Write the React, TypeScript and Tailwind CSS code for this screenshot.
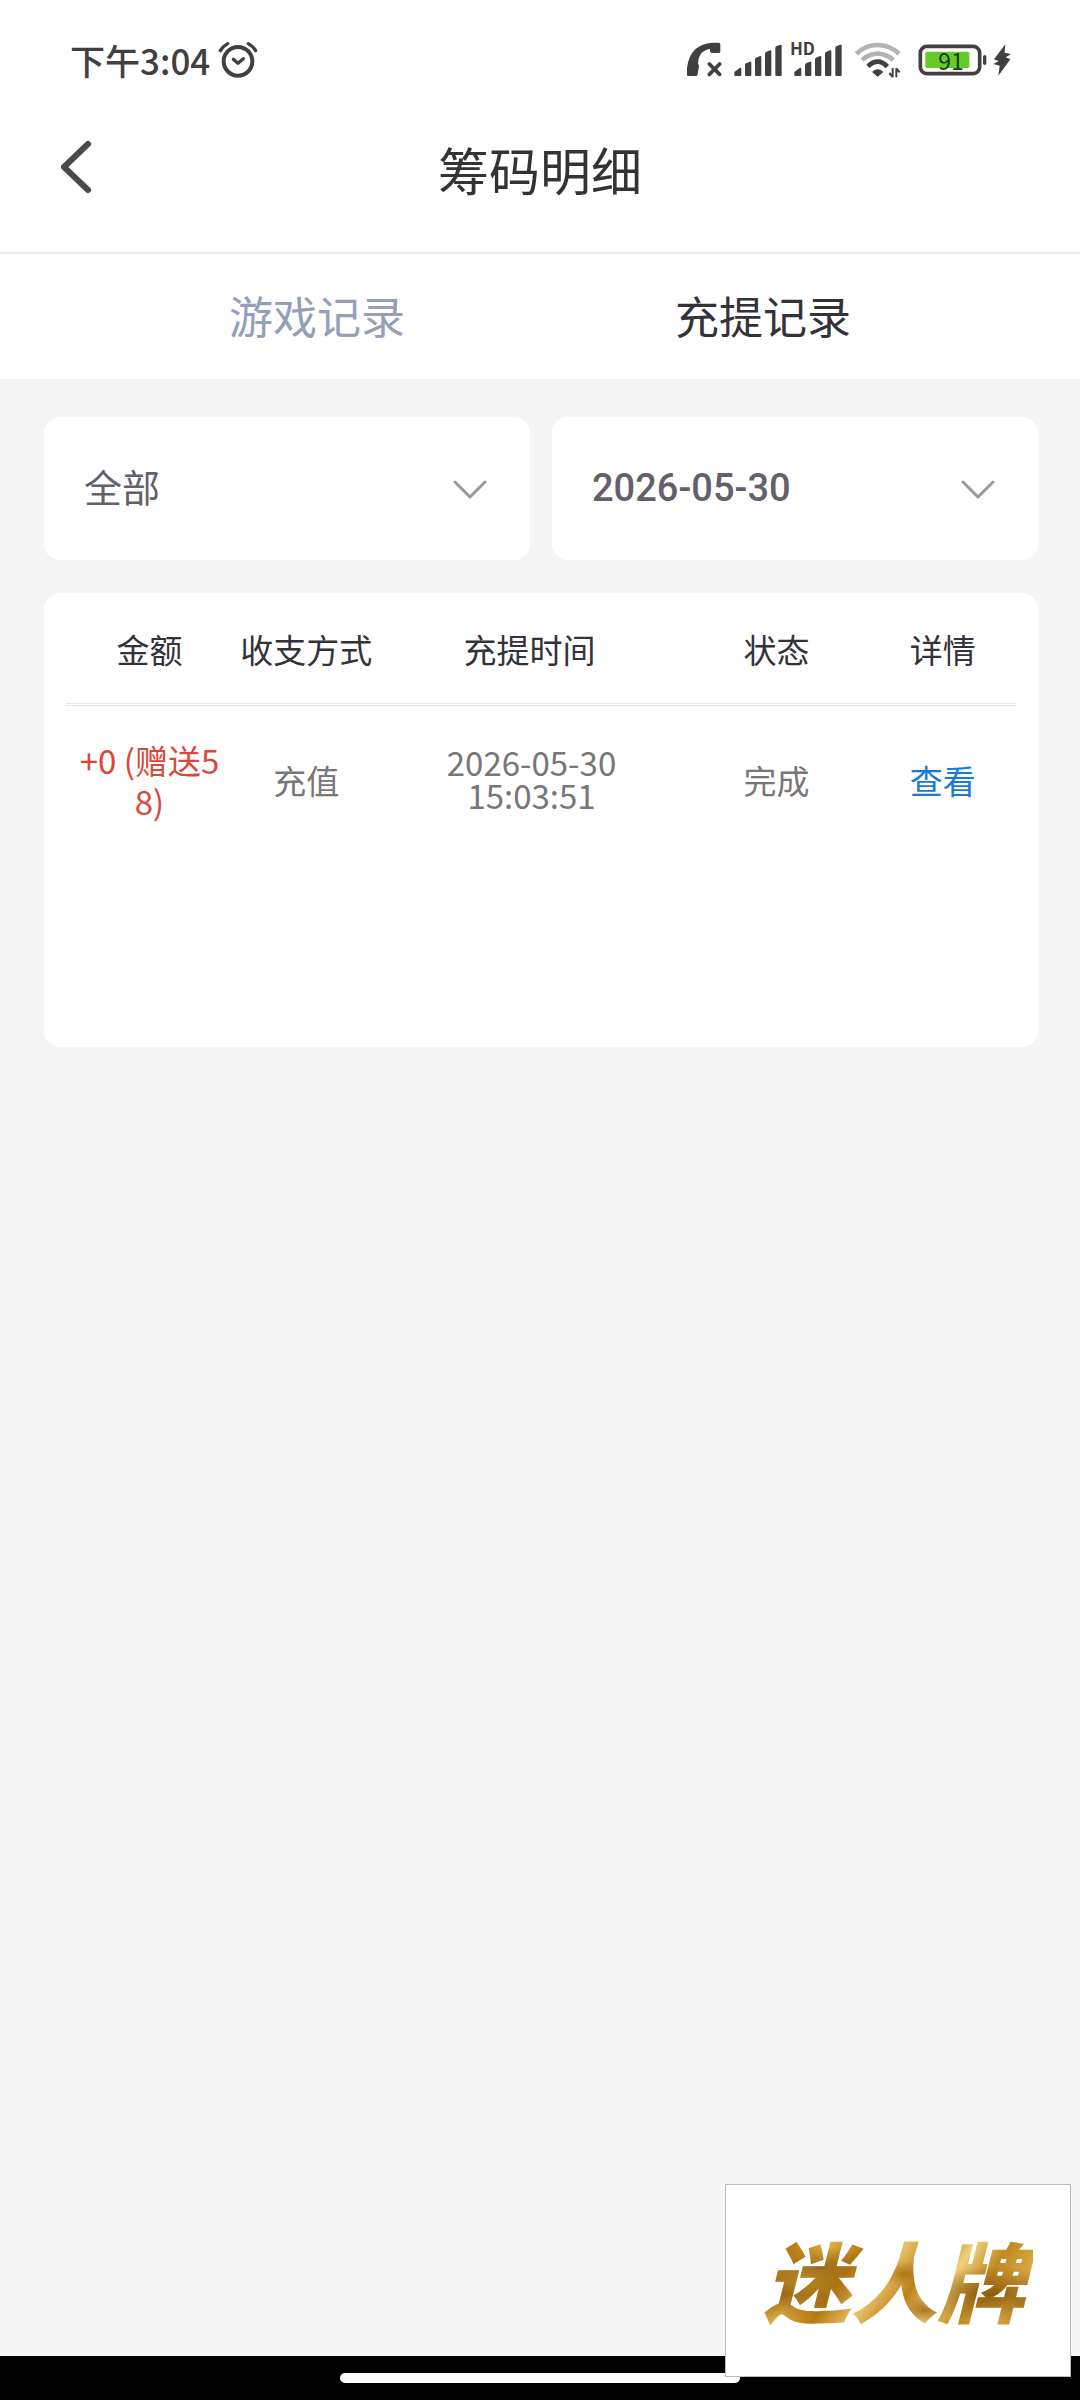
import React, { useState } from 'react';

interface ChipRecord {
  id: number;
  amount: string;
  method: string;
  date: string;
  time: string;
  status: string;
}

interface FilterProps {
  label: string;
  options: string[];
  className?: string;
}

const records: ChipRecord[] = [
  { id: 1, amount: '+0 (赠送58)', method: '充值', date: '2026-05-30', time: '15:03:51', status: '完成' },
];

const tabs = ['游戏记录', '充提记录'];

const SignalBars = () => (
  <svg className="w-12 h-8" viewBox="0 0 144 96" fill="#404040" aria-hidden="true">
    <path d="M1 84 17 72q5-2 5 3v18q0 3-3 3H4q-3 0-3-3z" />
    <path d="M33 63q0-3 3-5l12-5q4-1 4 3v37q0 3-3 3H36q-3 0-3-3z" />
    <path d="M63 46q0-3 3-5l12-5q4-1 4 3v54q0 3-3 3H66q-3 0-3-3z" />
    <path d="M93 29q0-3 3-5l12-5q4-1 4 3v71q0 3-3 3H96q-3 0-3-3z" />
    <path d="M124 12q0-3 3-5l12-5q4-1 4 3v88q0 3-3 3h-13q-3 0-3-3z" />
  </svg>
);

const StatusBar = () => (
  <div className="flex h-[119px] items-center justify-between pl-[70px] pr-[68px] text-[#404040]">
    <div className="flex items-center gap-2">
      <span className="text-[35px] font-medium leading-10">下午3:04</span>
      <svg className="w-10 h-10" viewBox="0 0 120 120" fill="none" stroke="#404040" strokeLinecap="round" aria-hidden="true">
        <circle cx="60" cy="64" r="43" strokeWidth="12" />
        <path d="M46 58 60 70 76 56" strokeWidth="10" strokeLinejoin="round" />
        <path d="M7 32Q15 19 29 11M113 32Q105 19 91 11" strokeWidth="10" />
      </svg>
    </div>

    <div className="flex items-center">
      <svg className="mr-3 size-9" viewBox="0 0 108 108" aria-hidden="true">
        <path
          d="M3 99V78Q7 42 28 22 48 4 78 2h20q5 0 5 5v22q0 4-5 4H78q-5 0-6-5v-7Q52 24 43 38 36 49 36 66q3 2 3 6l-4 25q-1 5-5 5H7q-4 0-4-3z"
          fill="#404040"
        />
        <path d="m70 66 31 31M101 66 70 97" stroke="#404040" strokeWidth="11" strokeLinecap="round" />
      </svg>
      <SignalBars />
      <div className="relative ml-3">
        <SignalBars />
        <span className="absolute -left-1 -top-1 bg-white pr-px text-[17px] font-bold leading-4">HD</span>
      </div>
      <svg className="ml-3 h-9 w-12" viewBox="0 0 144 108" fill="none" aria-hidden="true">
        <path d="M7 35Q35 9 71 9t64 26" stroke="#b3b3b3" strokeWidth="14" />
        <path d="M24 54Q46 35 71 35t47 19" stroke="#b3b3b3" strokeWidth="14" />
        <path d="M42 73q14-14 29-14t29 15" stroke="#404040" strokeWidth="14" />
        <path d="M71 102 57 90q14-13 28 0z" fill="#404040" stroke="#404040" strokeWidth="4" strokeLinejoin="round" />
        <path d="M116 78v27L106 93M127 106V79l10 12" stroke="#404040" strokeWidth="6" strokeLinejoin="bevel" />
      </svg>
      <div className="relative ml-4">
        <svg className="h-8 w-[70px]" viewBox="0 0 210 96" aria-hidden="true">
          <rect x="7" y="7" width="178" height="82" rx="20" fill="#fff" stroke="#404040" strokeWidth="11" />
          <rect x="22" y="23" width="132" height="49" rx="5" fill="#64cb2b" />
          <rect x="195" y="33" width="10" height="30" rx="5" fill="#404040" />
        </svg>
        <span className="absolute inset-0 pr-1 text-center text-[23px] leading-8 text-[#173a08]">91</span>
      </div>
      <svg className="ml-1 h-8 w-5" viewBox="0 0 56 96" fill="#404040" aria-hidden="true">
        <path d="M38 1 4 46l14 5L2 60l19 5-4 30 36-49-14-6 16-10-19-4z" />
      </svg>
    </div>
  </div>
);

const Filter = ({ label, options, className = '' }: FilterProps) => (
  <div className="relative flex-1">
    <select
      aria-label={label}
      className={`block h-[143px] w-full appearance-none rounded-2xl bg-white px-10 text-[#62606b] outline-none ${className}`}
    >
      {options.map((option) => (
        <option key={option}>{option}</option>
      ))}
    </select>
    <svg
      className="pointer-events-none absolute right-[42px] top-[63px] h-5 w-9"
      viewBox="0 0 36 20"
      fill="none"
      stroke="#999"
      strokeWidth="3"
      strokeLinecap="round"
      strokeLinejoin="round"
      aria-hidden="true"
    >
      <path d="m3 2 15 15L33 2" />
    </svg>
  </div>
);

const RecordTable = () => (
  <div className="min-h-[454px] rounded-2xl bg-white px-[22px]">
    <table className="w-full table-fixed text-center text-[33px]">
      <colgroup>
        <col className="w-[18%]" />
        <col className="w-[15%]" />
        <col className="w-[32%]" />
        <col className="w-[20%]" />
        <col className="w-[15%]" />
      </colgroup>
      <thead className="text-[#33323a]">
        <tr className="h-[111px] border-b-3 border-double border-[#e6e6e6]">
          {['金额', '收支方式', '充提时间', '状态', '详情'].map((title) => (
            <th key={title} className="whitespace-nowrap pr-1 pt-1 font-normal">{title}</th>
          ))}
        </tr>
      </thead>
      <tbody className="text-[#777]">
        {records.map((record) => (
          <tr key={record.id} className="h-[152px]">
            <td className="break-all pl-2 pr-3 leading-[41px] text-[#d9483b]">{record.amount}</td>
            <td className="pr-1">{record.method}</td>
            <td className="pb-1 leading-[33px]">
              {record.date}
              <br />
              {record.time}
            </td>
            <td className="pr-1">{record.status}</td>
            <td className="pr-1">
              <a href="#detail" className="text-[#1a7ad9]">查看</a>
            </td>
          </tr>
        ))}
      </tbody>
    </table>
  </div>
);

const App = () => {
  const [activeTab, setActiveTab] = useState('充提记录');

  return (
    <div className="relative flex min-h-screen flex-col bg-[#f5f5f5] font-['Noto_Sans_CJK_SC',sans-serif]">
      <header className="border-b-2 border-[#ebebeb] bg-white">
        <StatusBar />
        <div className="grid h-[133px] grid-cols-[1fr_auto_1fr] items-start pt-3">
          <button type="button" aria-label="返回" className="ml-14 mt-2 w-10">
            <svg className="h-14 w-10" viewBox="0 0 40 56" fill="none" stroke="#4a4a4a" strokeWidth="6" strokeLinecap="round" strokeLinejoin="round">
              <path d="M32 5 8 28l24 23" />
            </svg>
          </button>
          <h1 className="text-[51px] leading-[76px] text-[#333]">筹码明细</h1>
        </div>
      </header>

      <nav className="grid grid-cols-2 bg-white px-[94px]">
        {tabs.map((tab) => (
          <button
            key={tab}
            type="button"
            onClick={() => setActiveTab(tab)}
            className={`h-[125px] pb-1 text-[44px] ${activeTab === tab ? 'text-[#33323a]' : 'text-[#94a0b8]'}`}
          >
            {tab}
          </button>
        ))}
      </nav>

      <main className="flex flex-1 flex-col gap-[33px] pb-8 pl-11 pr-[42px] pt-[38px]">
        <div className="flex gap-[22px]">
          <Filter label="类型" options={['全部', '充值', '提现']} className="pb-1.5 text-[38px]" />
          <Filter label="日期" options={['2026-05-30']} className="font-[Roboto,sans-serif] text-[38px] font-medium" />
        </div>
        <RecordTable />
      </main>

      <footer className="flex h-11 items-center justify-center bg-black">
        <div className="h-[10px] w-[37%] rounded-full bg-white" />
      </footer>

      <div className="absolute bottom-[23px] right-[9px] flex h-[193px] w-[346px] items-center justify-center border border-[#bbb] bg-white">
        <span className="bg-[radial-gradient(ellipse_at_20%_40%,#8a5a0ccc_0%,transparent_18%),radial-gradient(ellipse_at_8%_60%,#8a5a0ccc_0%,transparent_22%),radial-gradient(ellipse_at_52%_45%,#a86a10cc_0%,transparent_12%),radial-gradient(ellipse_at_60%_72%,#9c5f0ccc_0%,transparent_10%),radial-gradient(ellipse_at_86%_60%,#7d4f0acc_0%,transparent_24%),linear-gradient(125deg,#a8700f_0%,#b87d16_14%,#e0ae45_24%,#b87a14_34%,#e9c068_45%,#bd8219_55%,#efcf7c_64%,#c08a22_74%,#dba842_84%,#a06c10_100%)] bg-clip-text pb-1 pr-2 text-[87px] font-black italic text-transparent">
          迷人牌
        </span>
      </div>
    </div>
  );
};

export default App;
